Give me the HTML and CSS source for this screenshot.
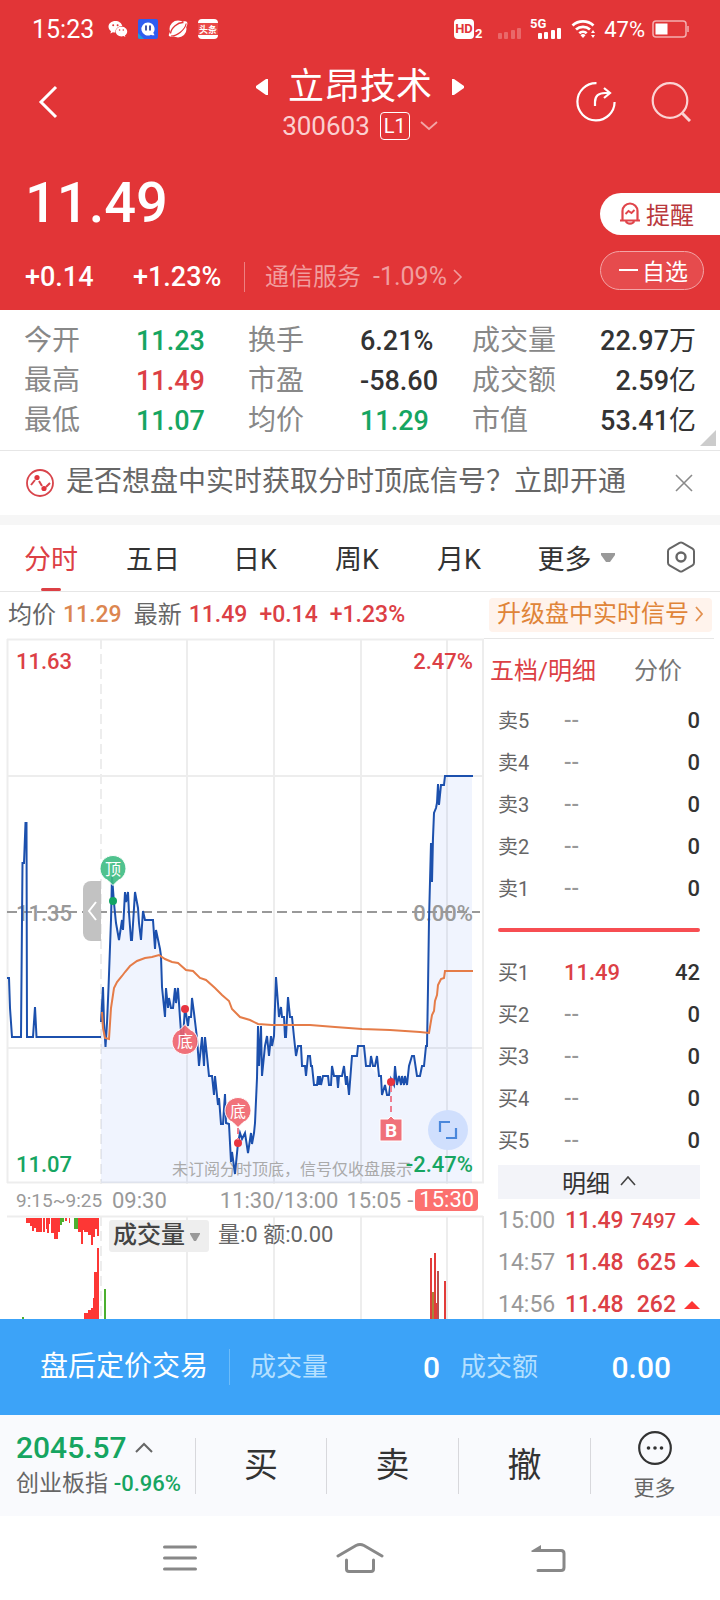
FILE: index.html
```html
<!DOCTYPE html>
<html lang="zh-CN">
<head>
    <meta charset="UTF-8">
    <meta name="viewport" content="width=device-width, initial-scale=1.0">
    <title>立昂技术 300603</title>
    <link rel="stylesheet" href="styles.css">
</head>
<body>
    <header class="top">
        <div class="status-bar">
            <span class="clock">15:23</span>
            <div class="status-apps">
                <svg width="20" height="20" viewBox="0 0 20 20" fill="#fff">
                    <path d="M7.5 2C3.4 2 .5 4.600 .5 7.800c0 1.800 1 3.400 2.500 4.500L2.400 14.500l2.500-1.300c.9.300 1.600.4 2.600.4-.6-3.600 2.600-6.600 6.800-6.600C13.600 4 10.900 2 7.500 2z"/>
                    <path d="M13.500 7.700c-3.300 0-5.700 2.100-5.700 4.800s2.400 4.900 5.700 4.900c.7 0 1.400-.1 2-.3l1.900 1-.5-1.700c1.400-.9 2.300-2.300 2.300-3.900 0-2.700-2.500-4.800-5.700-4.800z"/>
                    <g fill="#e23537"><circle cx="5.200" cy="6.200" r="1"/><circle cx="9.600" cy="6.200" r="1"/><circle cx="11.600" cy="11" r=".8"/><circle cx="15.300" cy="11" r=".8"/></g>
                </svg>
                <svg width="20" height="20" viewBox="0 0 20 20">
                    <rect width="20" height="20" rx="2" fill="#2f5df0"/>
                    <path d="M0 14l6 6H2a2 2 0 0 1-2-2z" fill="#1d9bd8"/>
                    <path d="M10 3.500a6.500 6.500 0 1 0 3 12.200c1 .6 2.200.8 3.500.5l-1.200-2.400A6.500 6.500 0 0 0 10 3.500z" fill="#fff"/>
                    <path d="M8 7v4M12 7v4" stroke="#1b2f8f" stroke-width="1.600" stroke-linecap="round"/>
                </svg>
                <svg width="20" height="20" viewBox="0 0 20 20">
                    <circle cx="10" cy="10" r="8.500" fill="#fff"/>
                    <path d="M1 17C-1 13 15-1 19 3c3 5-13 18-18 14z" fill="#fff"/>
                    <path d="M2.500 14.500C3 9 10 3 15.500 3.500" fill="none" stroke="#e23537" stroke-width="1.400"/>
                    <path d="M3 17C9 17 17 11 18.200 4.500" fill="none" stroke="#e23537" stroke-width="1.200"/>
                </svg>
                <svg width="20" height="20" viewBox="0 0 20 20">
                    <rect width="20" height="20" rx="4" fill="#fff"/>
                    <rect y="4" width="20" height="12" fill="#ea4a48"/>
                    <text x="10" y="13.500" class="app-label">头条</text>
                </svg>
            </div>
            <div class="status-right">
                <svg width="110" height="24" viewBox="0 0 110 24" fill="#fff">
                    <rect x="0" y="2" width="20" height="20" rx="4"/>
                    <text x="10" y="16" class="hd">HD</text>
                    <text x="21" y="21" class="sub">2</text>
                    <g opacity=".25"><rect x="44" y="16" width="4" height="6" rx="1"/><rect x="50" y="15" width="4" height="7" rx="1"/><rect x="57" y="13" width="4" height="9" rx="1"/><rect x="63" y="11" width="4" height="11" rx="1"/></g>
                    <text x="76" y="11" class="net">5G</text>
                    <rect x="84" y="16" width="4" height="6" rx="1"/><rect x="90" y="15" width="4" height="7" rx="1"/><rect x="97" y="13" width="4" height="9" rx="1"/><rect x="103" y="11" width="4" height="11" rx="1"/>
                </svg>
                <svg width="26" height="22" viewBox="0 0 26 22">
                    <g fill="none" stroke="#fff" stroke-width="2.800">
                        <path d="M1.500 7.500a15.500 15.500 0 0 1 21 0"/><path d="M5 11.500a10.500 10.500 0 0 1 14 0"/><path d="M8.300 15.200a5.600 5.600 0 0 1 7.400 0"/>
                    </g>
                    <path d="M12 20l-2.500-2.800a3.600 3.600 0 0 1 5 0zM20 15l2-3 2 3zM20 17l2 3 2-3z" fill="#fff"/>
                </svg>
                <span class="battery-text">47%</span>
                <svg width="37" height="18" viewBox="0 0 37 18">
                    <rect x="1" y="1" width="33" height="16" rx="3" fill="none" stroke="#fff" stroke-opacity=".6" stroke-width="1.500"/>
                    <rect x="3.500" y="3.500" width="12" height="11" fill="#fff"/>
                    <path d="M36 6v6" stroke="#fff" stroke-opacity=".6" stroke-width="1.500"/>
                </svg>
            </div>
        </div>

        <div class="title-bar">
            <button class="icon-btn back" aria-label="返回">
                <svg width="20" height="34" viewBox="0 0 20 34"><path d="M18 2L3 17l15 15" fill="none" stroke="#fff" stroke-width="3"/></svg>
            </button>
            <div class="title">
                <div class="title-name">
                    <button class="icon-btn" aria-label="上一只"><svg width="12" height="18" viewBox="0 0 12 18"><path d="M12 1v16h-2L0 10V8l10-7z" fill="#fff"/></svg></button>
                    <h1>立昂技术</h1>
                    <button class="icon-btn" aria-label="下一只"><svg width="12" height="18" viewBox="0 0 12 18"><path d="M0 1v16h2l10-7V8L2 1z" fill="#fff"/></svg></button>
                </div>
                <div class="title-code">
                    <span>300603</span>
                    <span class="level">L1</span>
                    <svg width="18" height="10" viewBox="0 0 18 10"><path d="M1 1l8 7 8-7" fill="none" stroke="#f3a5a6" stroke-width="1.800"/></svg>
                </div>
            </div>
            <div class="title-tools">
                <button class="icon-btn" aria-label="分享">
                    <svg width="40" height="40" viewBox="0 0 40 40" fill="none" stroke="#fff" stroke-width="2.200"><path d="M20.500 1.200A18.600 18.600 0 1 0 38.600 20"/><path d="M19 24v-4c0-6 4-9 10-9h5M28 6l6 5-6 5"/></svg>
                </button>
                <button class="icon-btn" aria-label="搜索">
                    <svg width="40" height="40" viewBox="0 0 40 40" fill="none" stroke="#fbd3d3" stroke-width="2.200"><circle cx="19" cy="18.500" r="17.300"/><path d="M31.500 31.500l7.500 7.500" stroke-width="3"/></svg>
                </button>
            </div>
        </div>

        <div class="summary">
            <div>
                <div class="price">11.49</div>
                <div class="change">
                    <span class="change-abs">+0.14</span>
                    <span class="change-pct">+1.23%</span>
                    <a class="sector" href="#">
                        <span>通信服务</span>
                        <span class="sector-pct">-1.09%</span>
                        <svg width="10" height="16" viewBox="0 0 10 16"><path d="M1 1l7 7-7 7" fill="none" stroke="#f19d9e" stroke-width="1.600"/></svg>
                    </a>
                </div>
            </div>
            <div class="actions">
                <button class="alert">
                    <svg width="24" height="24" viewBox="0 0 24 24" fill="none" stroke="#e0454b" stroke-width="2.200"><path d="M2 19.500h20M4.500 19.500V10a7.500 7.500 0 0 1 15 0v9.500M8 20.500c1 2.800 7 2.800 8 0"/><path d="M7.500 13l3-3 3 2 3-3" stroke-width="1.800"/></svg>
                    提醒
                </button>
                <button class="favorite"><i></i>自选</button>
            </div>
        </div>
    </header>

    <section class="stats">
        <dl>
            <dt>今开</dt><dd class="green">11.23</dd>
            <dt>换手</dt><dd>6.21%</dd>
            <dt>成交量</dt><dd class="right">22.97<span>万</span></dd>
            <dt>最高</dt><dd class="red">11.49</dd>
            <dt>市盈</dt><dd>-58.60</dd>
            <dt>成交额</dt><dd class="right">2.59<span>亿</span></dd>
            <dt>最低</dt><dd class="green">11.07</dd>
            <dt>均价</dt><dd class="green">11.29</dd>
            <dt>市值</dt><dd class="right">53.41<span>亿</span></dd>
        </dl>
        <span class="corner"></span>
    </section>

    <section class="notice">
        <svg width="28" height="28" viewBox="0 0 28 28" fill="none" stroke="#d8444b" stroke-width="1.800"><circle cx="14" cy="14" r="13"/><path d="M5 16l4-5M13 12l3 5M20 18l4-4" stroke-width="2"/><g fill="#e0343c" stroke="none"><circle cx="11" cy="8.500" r="2.600"/><circle cx="18" cy="19.500" r="2.600"/></g></svg>
        <a href="#">是否想盘中实时获取分时顶底信号？立即开通</a>
        <button class="icon-btn" aria-label="关闭"><svg width="18" height="18" viewBox="0 0 18 18"><path d="M1 1l16 16M17 1L1 17" stroke="#8a8a8a" stroke-width="1.600"/></svg></button>
    </section>

    <nav class="tabs">
        <button class="active">分时</button>
        <button>五日</button>
        <button>日K</button>
        <button>周K</button>
        <button>月K</button>
        <button class="more">更多<svg width="14" height="9" viewBox="0 0 14 9"><path d="M0 0h14v2L9 9H5L0 2z" fill="#999"/></svg></button>
        <button aria-label="设置"><svg width="28" height="32" viewBox="0 0 28 32" fill="none" stroke="#666" stroke-width="2"><path d="M12.500 1.900L2.500 7.700Q1 8.600 1 10.300v11.400q0 1.700 1.500 2.600l10 5.800q1.500.8 3 0l10-5.800q1.500-.9 1.500-2.600V10.300q0-1.700-1.500-2.600l-10-5.800q-1.500-.8-3 0z"/><circle cx="14" cy="16" r="4.500" stroke-width="2.400"/></svg></button>
    </nav>

    <div class="info">
        <span>均价</span><b class="orange">11.29</b>
        <span class="latest">最新</span><b class="red">11.49</b>
        <b class="red wide">+0.14</b><b class="red wide">+1.23%</b>
        <a href="#" class="upgrade">升级盘中实时信号<svg width="9" height="16" viewBox="0 0 9 16"><path d="M1 1l6 7-6 7" fill="none" stroke="#e39150" stroke-width="1.800"/></svg></a>
    </div>

    <main class="quote">
        <div class="charts">
            <div class="price-chart">
                <svg viewBox="0 0 484 546">
                    <g class="grid">
                        <path d="M7 1.500H484M7 138H483M7 410H483M7 544.500H484M7.500 1V545M187 1V546M274 1V546M361 1V546M447 1V546M483 1V545"/>
                        <path d="M101 1V546" stroke-dasharray="10 5"/>
                    </g>
                    <path class="area" d="M101 384L103 349 104 384 105.500 409 107 385 108.500 350 111 282 112 238 114 265 116 285 119 302 122 282 123 292 125 254 126 264 128 254 129 275 131 302 132 302 135 254 138 270 139 285 141 302 143 273 145 282 153 282 155 311 156 292 160 311 161 318 162 349 165 379 166 350 168 370 175 350 178 350 180 380 182 408 185 370 188 388 191 379 192 360 194 375 199 428 202 399 204 428 205 399 209 438 212 438 214 457 215 438 218 467 221 486 225 456 229 486 231 524 235 536 238 505 245 495 248 515 254 495 257 440 258 388 262 438 267 398 274 398 276 339 279 379 284 379 286 399 288 359 292 379 296 418 301 408 305 428 306 438 308 418 314 447 328 438 337 438 349 457 352 418 364 408 370 428 379 438 382 457 389 457 391 441 395 428 397 447 407 447 409 428 414 418 417 438 424 428 427 408 428 350 429 282 431 205 434 175 438 146 441 147 445 138 472 138V545H101z"/>
                    <path class="middle" d="M7 274H480"/>
                    <g class="mark gray"><text x="16" y="283">11.35</text><text x="473" y="283" text-anchor="end">0.00%</text></g>
                    <g class="mark"><text class="up" x="16" y="31">11.63</text><text class="up" x="473" y="31" text-anchor="end">2.47%</text><text class="down" x="16" y="534">11.07</text></g>
                    <text class="tip" x="172" y="537">未订阅分时顶底，信号仅收盘展示</text>
                    <text class="mark down" x="473" y="534" text-anchor="end">-2.47%</text>
                    <polyline class="line" points="7,340 9,340 10,370 12,399 21,399 22.500,225 24,225 25.500,185 26.500,185 27,399 33,399 35,369 36.500,399 101,399"/>
                    <polyline class="line" points="101,384 103,349 104,384 105.500,409 107,385 108.500,350 111,282 112,238 114,265 116,285 119,302 122,282 123,292 125,254 126,264 128,254 129,275 131,302 132,302 135,254 138,270 139,285 141,302 143,273 145,282 153,282 155,311 156,292 160,311 161,318 162,349 165,379 166,350 168,370 169,360 171,370 173,370 175,350 176,365 178,350 180,380 182,408 183,399 185,370 188,388 189,379 191,379 192,360 194,375 197,400 199,428 202,399 204,428 205,399 207,418 209,438 212,438 214,457 215,438 218,467 219,460 221,486 223,486 225,456 226,485 229,486 231,524 232,514 235,536 238,505 240,495 242,501 245,495 248,515 251,495 252,506 254,495 255,485 257,440 258,388 259,428 261,388 262,438 265,408 267,398 269,418 271,398 272,408 274,398 276,339 279,379 281,369 282,379 284,379 285,399 286,399 288,359 290,379 292,379 294,399 296,418 298,408 301,408 302,428 305,428 306,438 308,418 310,418 311,428 312,428 314,447 317,447 318,438 319,447 320,438 321,447 323,438 328,438 329,447 331,447 332,428 334,438 337,438 338,450 339,438 342,438 344,428 346,447 347,438 349,457 352,418 357,418 358,408 364,408 366,428 370,428 371,418 373,428 375,428 377,418 379,438 381,438 382,457 385,447 387,457 389,457 391,441 394,447 395,428 396,438 397,447 399,438 401,447 402,438 404,447 405,438 407,447 409,428 412,418 414,418 417,438 420,438 422,428 424,428 426,408 427,408 428,350 429,282 431,205 432,244 433,200 434,175 436,170 437,165 438,146 439,167 441,147 444,147 445,138 473,138"/>
                    <polyline class="line avg" points="102,374 103,390 105,400 109,401 111,370 114,350 117,344 122,338 125,334 130,328 137,323 145,320 152,319 159,317 165,321 172,324 178,325 186,332 193,333 200,340 206,342 215,350 222,357 229,363 232,371 236,375 240,379 250,382 258,386 272,387 310,387 335,389 362,391 390,392 420,394 429,395 432,377 434,373 435,363 437,357 438,347 441,341 444,340 445,333 473,333"/>
                    <g class="signal top-signal">
                        <path d="M108 242.500l5 5 5-5A13 13 0 1 0 108 242.500z"/>
                        <circle cx="113" cy="263" r="4"/>
                        <text x="113" y="237">顶</text>
                    </g>
                    <g class="signal">
                        <path d="M180 391.500l5-5 5 5A13 13 0 1 1 180 391.500z"/>
                        <circle cx="185" cy="371" r="4"/>
                        <text x="185" y="409">底</text>
                        <path d="M233 484.500l5 5 5-5A13 13 0 1 0 233 484.500z"/>
                        <circle cx="238" cy="505" r="4"/>
                        <text x="238" y="479">底</text>
                        <path class="stem" d="M238 490v12M391 448v30"/>
                        <path d="M380 481h8l3-3 3 3h8v22h-22z"/>
                        <circle cx="391" cy="444" r="4"/>
                        <text class="letter" x="391" y="499">B</text>
                    </g>
                </svg>
                <button class="handle" aria-label="收起"><svg width="10" height="20" viewBox="0 0 10 20"><path d="M9 1L2 10l7 9" fill="none" stroke="#fff" stroke-width="2"/></svg></button>
                <button class="expand" aria-label="全屏"><svg width="20" height="20" viewBox="0 0 20 20"><path d="M2 12V2h10M18 8v10H8" fill="none" stroke="#4a87db" stroke-width="2.200"/></svg></button>
            </div>
            <div class="axis">
                <span class="pre">9:15~9:25</span>
                <span>09:30</span>
                <span class="noon">11:30/13:00</span>
                <span class="close">15:05</span>
                <span>-</span>
                <span class="after">15:30</span>
            </div>
            <div class="volume">
                <svg viewBox="0 0 484 103">
                    <g class="grid">
                        <path d="M7 .5H483M187 0V103M274 0V103M361 0V103M447 0V103M483 0V103"/>
                        <path d="M101 0V103" stroke-dasharray="10 5"/>
                    </g>
                    <path fill="#fd3735" d="M26 2h16v14h-6v-4h-2v3h-2v-5h-2V7h-4zM43 2h2v14h-2zM46 2h4v6h-1v9h-2v-4h-1zM51 2h9v14h-2v7h-4v-6h-3zM65 2h2v3h-2zM69 2h1v5h-1zM78 2h21v18h-2v-7h-2v8h-2v8h-2v-10h-3v-3h-4v-2h-1v14h-2V16h-3zM84 103v-6h4v-3h3v-2h2V82h1V56h3V32h2v71z"/>
                    <path fill="#4caf2f" d="M60 2h4v4h-2v3h-2zM74 2h4v11h-4zM104 73h2v30h-2zM22 101h2v2h-2z"/>
                    <path fill="#e23c3a" d="M430 42h2v61h-2zM434 37h2v66h-2zM436 87h2v16h-2zM444 65h2v38h-2z"/>
                    <path fill="#a8843a" d="M432 76h2v27h-2z"/>
                    <path fill="#b8504e" d="M437 55h2v48h-2z"/>
                </svg>
                <div class="volume-head">
                    <div class="picker">
                        <select aria-label="指标"><option>成交量</option><option>MACD</option></select>
                        <svg width="10" height="8" viewBox="0 0 10 8"><path d="M0 0h10v1L6 8H4L0 1z" fill="#999"/></svg>
                    </div>
                    <span>量:0 额:0.00</span>
                </div>
            </div>
        </div>

        <aside class="book">
            <div class="book-tabs">
                <button class="active">五档/明细</button>
                <button>分价</button>
            </div>
            <table>
                <tr><th>卖5</th><td>--</td><td>0</td></tr>
                <tr><th>卖4</th><td>--</td><td>0</td></tr>
                <tr><th>卖3</th><td>--</td><td>0</td></tr>
                <tr><th>卖2</th><td>--</td><td>0</td></tr>
                <tr><th>卖1</th><td>--</td><td>0</td></tr>
            </table>
            <div class="ratio"></div>
            <table>
                <tr><th>买1</th><td class="red">11.49</td><td>42</td></tr>
                <tr><th>买2</th><td>--</td><td>0</td></tr>
                <tr><th>买3</th><td>--</td><td>0</td></tr>
                <tr><th>买4</th><td>--</td><td>0</td></tr>
                <tr><th>买5</th><td>--</td><td>0</td></tr>
            </table>
            <button class="detail">明细<svg width="16" height="10" viewBox="0 0 16 10"><path d="M1 9l7-8 7 8" fill="none" stroke="#444" stroke-width="1.600"/></svg></button>
            <table class="trades">
                <tr><td>15:00</td><td>11.49</td><td class="long">7497</td><td><i></i></td></tr>
                <tr><td>14:57</td><td>11.48</td><td>625</td><td><i></i></td></tr>
                <tr><td>14:56</td><td>11.48</td><td>262</td><td><i></i></td></tr>
            </table>
        </aside>
    </main>

    <div class="after-hours">
        <a href="#">盘后定价交易</a>
        <span class="label">成交量</span><span class="num">0</span>
        <span class="label">成交额</span><span class="num">0.00</span>
    </div>

    <footer class="trade-bar">
        <div class="index">
            <div class="index-value">2045.57<svg width="18" height="11" viewBox="0 0 18 11"><path d="M1 10l8-8 8 8" fill="none" stroke="#666" stroke-width="2"/></svg></div>
            <div class="index-name">创业板指 <span>-0.96%</span></div>
        </div>
        <button>买</button>
        <button>卖</button>
        <button>撤</button>
        <button class="more">
            <svg width="34" height="34" viewBox="0 0 34 34"><circle cx="17" cy="17" r="15.800" fill="none" stroke="#333" stroke-width="2.200"/><g fill="#333"><circle cx="10.500" cy="17" r="1.800"/><circle cx="17" cy="17" r="1.800"/><circle cx="23.500" cy="17" r="1.800"/></g></svg>
            更多
        </button>
    </footer>

    <nav class="system-nav">
        <button class="icon-btn" aria-label="菜单"><svg width="34" height="28" viewBox="0 0 34 28"><path d="M1.500 3h31M1.500 14h31M1.500 25h31" stroke="#888" stroke-width="3" stroke-linecap="round"/></svg></button>
        <button class="icon-btn" aria-label="主页"><svg width="48" height="32" viewBox="0 0 48 32" fill="none" stroke="#888" stroke-width="3" stroke-linecap="round"><path d="M2 14L20 3.500q4-2 8 0L46 14"/><path d="M10.500 18v9q0 2.500 2.500 2.500h22q2.500 0 2.500-2.500v-9"/></svg></button>
        <button class="icon-btn" aria-label="后退"><svg width="36" height="28" viewBox="0 0 36 28"><path d="M6 6.500h24q3 0 3 3v14q0 3-3 3H7" fill="none" stroke="#888" stroke-width="3" stroke-linecap="round"/><path d="M0 7l10-6v7H1z" fill="#888"/></svg></button>
    </nav>
</body>
</html>
```

FILE: styles.css
```css
* {
    box-sizing: border-box;
}
body {
    display: flex;
    flex-direction: column;
    height: 100vh;
    margin: 0;
    overflow: hidden;
    font-family: Roboto, "Noto Sans CJK SC", sans-serif;
    font-size: 24px;
    color: #333;
    background: #fff;
}
button {
    padding: 0;
    border: none;
    background: none;
    font: inherit;
    color: inherit;
    cursor: pointer;
}
a {
    color: inherit;
    text-decoration: none;
}
svg {
    display: block;
    flex: none;
}
h1, dl, dd {
    margin: 0;
}
.icon-btn {
    display: flex;
}
.red {
    color: #dc4045;
}
.green {
    color: #16a561;
}
.orange {
    color: #dc8650;
}

/* header */
.top {
    flex: none;
    background: #e23537;
    color: #fff;
}
.status-bar {
    display: flex;
    align-items: center;
    height: 58px;
    padding: 0 31px 0 32px;
}
.clock {
    font-size: 25px;
}
.status-apps {
    display: flex;
    gap: 10px;
    margin-left: 14px;
}
.status-right {
    display: flex;
    align-items: center;
    gap: 7px;
    margin-left: auto;
}
.app-label {
    font-size: 9px;
    font-weight: 700;
    text-anchor: middle;
    fill: #fff;
}
.hd {
    font-size: 13px;
    font-weight: 700;
    text-anchor: middle;
    fill: #e23537;
}
.sub, .net {
    font-size: 13px;
    font-weight: 700;
}
.battery-text {
    font-size: 22px;
}
.title-bar {
    display: grid;
    grid-template-columns: 1fr auto 1fr;
    align-items: center;
    height: 88px;
    padding: 0 29px;
}
.back {
    padding-left: 9px;
}
.title-name {
    display: flex;
    align-items: center;
    justify-content: center;
    gap: 20px;
}
.title h1 {
    font-size: 36px;
    font-weight: 400;
    line-height: 48px;
}
.title-code {
    display: flex;
    align-items: center;
    justify-content: center;
    gap: 10px;
    font-size: 26px;
    line-height: 30px;
    color: #fbcfcf;
}
.level {
    padding: 0 3px;
    border: 1px solid #fff;
    border-radius: 4px;
    font-size: 20px;
    line-height: 26px;
    color: #fff;
}
.title-tools {
    display: flex;
    justify-content: flex-end;
    gap: 35px;
}
.summary {
    display: flex;
    justify-content: space-between;
    padding: 27px 0 18px 25px;
}
.price {
    font-size: 56px;
    font-weight: 500;
    line-height: 60px;
}
.change {
    display: flex;
    align-items: center;
    margin-top: 29px;
    font-size: 27px;
    font-weight: 500;
    line-height: 30px;
}
.change-abs {
    width: 108px;
}
.change-pct {
    width: 111px;
}
.sector {
    display: flex;
    align-items: center;
    gap: 12px;
    padding-left: 20px;
    border-left: 1px solid #ee8081;
    font-size: 24px;
    font-weight: 400;
    color: #f19d9e;
}
.sector-pct {
    font-size: 25px;
}
.sector svg {
    margin-left: -6px;
}
.actions {
    display: flex;
    flex-direction: column;
    align-items: flex-end;
    gap: 16px;
    padding-top: 20px;
}
.alert {
    display: flex;
    align-items: center;
    gap: 4px;
    height: 42px;
    padding: 0 26px 2px 18px;
    border-radius: 21px 0 0 21px;
    background: #fff;
    color: #b9383d;
}
.favorite {
    display: flex;
    align-items: center;
    gap: 4px;
    height: 39px;
    margin-right: 16px;
    padding: 0 15px 2px 18px;
    border: 1px solid #f3a5a6;
    border-radius: 20px;
    background: #e64b4d;
    font-size: 23px;
}
.favorite i {
    width: 19px;
    height: 2px;
    background: #fff;
}

/* figures */
.stats {
    position: relative;
    flex: none;
    border-bottom: 1px solid #e6e6e6;
    padding: 11px 24px 9px;
}
.stats dl {
    display: grid;
    grid-template-columns: repeat(6, 1fr);
    font-size: 27px;
    line-height: 40px;
}
.stats dt {
    font-size: 28px;
    color: #888;
}
.stats dd {
    font-weight: 500;
    white-space: nowrap;
}
.stats dd span {
    font-weight: 400;
}
.stats .right {
    text-align: right;
}
.corner {
    position: absolute;
    right: 4px;
    bottom: 4px;
    border-left: 16px solid transparent;
    border-bottom: 16px solid #ccc;
}
.notice {
    display: flex;
    flex: none;
    align-items: center;
    gap: 12px;
    height: 74px;
    padding: 0 27px 0 26px;
    border-bottom: 10px solid #f6f6f6;
    font-size: 28px;
    line-height: 40px;
    color: #666;
}
.notice a {
    padding-bottom: 2px;
}
.notice .icon-btn {
    margin-left: auto;
}
.tabs {
    display: grid;
    flex: none;
    grid-template-columns: repeat(5, 102fr) 132fr 78fr;
    height: 67px;
    border-bottom: 1px solid #e6e6e6;
    font-size: 27px;
}
.tabs button {
    position: relative;
    display: flex;
    align-items: center;
    justify-content: center;
    padding-bottom: 2px;
}
.tabs .active {
    color: #dc4045;
}
.tabs .active::after {
    content: "";
    position: absolute;
    left: 50%;
    bottom: 0;
    width: 20px;
    height: 3px;
    margin-left: -10px;
    border-radius: 2px;
    background: #dc4045;
}
.tabs .more {
    gap: 9px;
}
.info {
    display: flex;
    flex: none;
    align-items: center;
    height: 46px;
    padding: 0 8px 1px;
    line-height: 32px;
    color: #666;
}
.info b {
    margin-left: 7px;
    font-size: 23px;
    font-weight: 500;
}
.info .latest, .info .wide {
    margin-left: 12px;
}
.upgrade {
    display: flex;
    align-items: center;
    gap: 6px;
    height: 34px;
    margin-left: auto;
    padding: 0 8px 1px;
    border-radius: 4px;
    background: #fff3ec;
    color: #e08438;
}

/* charts */
.quote {
    display: grid;
    flex: 1;
    grid-template-columns: 484fr 236fr;
    align-items: start;
    min-height: 0;
    overflow: hidden;
}
.charts svg {
    overflow: visible;
}
.price-chart, .volume {
    position: relative;
}
.price-chart > svg, .volume > svg {
    width: 100%;
}
.grid path {
    fill: none;
    stroke: #ededed;
    stroke-width: 2;
}
.area {
    fill: #3c78f0;
    fill-opacity: .08;
}
.middle {
    stroke: #999;
    stroke-width: 2;
    stroke-dasharray: 10 5;
}
.line {
    fill: none;
    stroke: #1c50ad;
    stroke-width: 2;
}
.avg {
    stroke: #e57c48;
}
.mark {
    font-size: 22px;
    font-weight: 500;
}
.gray {
    fill: #999;
}
.up {
    fill: #dc4045;
}
.down {
    fill: #16a561;
}
.tip {
    font-size: 16px;
    fill: #aaa;
}
.signal path {
    fill: #f0636b;
    fill-opacity: .9;
    stroke: #fff;
}
.signal circle {
    fill: #e7343f;
}
.signal text {
    font-size: 16px;
    text-anchor: middle;
    fill: #fff;
}
.signal .letter {
    font-size: 19px;
    font-weight: 700;
}
.signal .stem {
    fill: none;
    stroke: #ee7d90;
    stroke-width: 2;
    stroke-dasharray: 6 4;
}
.top-signal path {
    fill: #3dbb82;
}
.top-signal circle {
    fill: #12a564;
}
.handle {
    position: absolute;
    top: 243px;
    left: 83px;
    display: flex;
    align-items: center;
    justify-content: center;
    width: 18px;
    height: 60px;
    border-radius: 8px 0 0 8px;
    background: #c2c2c2;
}
.expand {
    position: absolute;
    right: 16px;
    bottom: 34px;
    display: flex;
    align-items: center;
    justify-content: center;
    width: 40px;
    height: 40px;
    border-radius: 50%;
    background: #d0dffd;
}
.axis {
    display: flex;
    align-items: center;
    height: 32px;
    padding-left: 16px;
    font-size: 22px;
    color: #999;
}
.axis .pre {
    width: 96px;
    font-size: 19px;
}
.axis .noon {
    margin-left: 53px;
}
.axis .close {
    margin: 0 6px 0 8px;
}
.axis .after {
    margin-left: 2px;
    padding: 0 4px;
    border-radius: 4px;
    background: #fc706e;
    line-height: 22px;
    color: #fff;
}
.volume-head {
    position: absolute;
    top: 4px;
    left: 109px;
    display: flex;
    align-items: center;
    gap: 9px;
    font-size: 22px;
    line-height: 28px;
    color: #666;
}
.volume-head span {
    padding-bottom: 3px;
}
.picker {
    position: relative;
    width: 100px;
    border-radius: 3px;
    background: #eee;
}
.picker select {
    display: block;
    width: 100%;
    height: 32px;
    padding: 0 4px 3px;
    border: none;
    background: none;
    appearance: none;
    font: inherit;
    font-size: 24px;
    font-weight: 500;
    color: #444;
}
.picker svg {
    position: absolute;
    top: 13px;
    right: 9px;
    pointer-events: none;
}

/* order book */
.book {
    margin-right: 6px;
    padding: 0 14px;
    border-top: 1px solid #e6e6e6;
}
.book-tabs {
    display: flex;
    gap: 38px;
    height: 61px;
    margin-left: -8px;
    padding-bottom: 3px;
    white-space: nowrap;
    color: #777;
}
.book-tabs .active {
    color: #dc4045;
}
.book table {
    width: 100%;
    border-collapse: collapse;
    table-layout: fixed;
}
.book th, .book td {
    height: 42px;
    padding: 0;
    font-size: 22px;
    font-weight: 500;
    line-height: 30px;
    text-align: left;
}
.book th {
    width: 66px;
    font-size: 20px;
    font-weight: 400;
    color: #666;
}
.book td:nth-child(2):not(.red) {
    color: #999;
}
.book td:last-child {
    text-align: right;
}
.ratio {
    height: 4px;
    margin: 18px 0 20px;
    border-radius: 2px;
    background: #f74e52;
}
.detail {
    display: flex;
    align-items: center;
    justify-content: center;
    gap: 10px;
    width: 100%;
    height: 34px;
    margin: 3px 0 1px;
    padding-bottom: 2px;
    background: #f3f4f9;
}
.book .trades td {
    width: 67px;
    font-size: 23px;
    color: #dc4045;
}
.book .trades td:first-child {
    font-weight: 400;
    color: #999;
}
.book .trades td:nth-child(2) {
    width: 57px;
    color: #dc4045;
}
.book .trades td:nth-child(3) {
    width: 54px;
    text-align: right;
}
.book .trades td:last-child {
    width: auto;
}
.book .trades .long {
    font-size: 20px;
}
.trades i {
    display: block;
    width: 16px;
    margin-left: auto;
    border: 8px solid transparent;
    border-top: none;
    border-bottom-color: #fd3735;
}

/* bottom bars */
.after-hours {
    display: grid;
    flex: none;
    grid-template-columns: 190px 100px 110fr 100px 131fr;
    align-items: center;
    height: 96px;
    padding: 0 49px 0 40px;
    background: #3ca3f8;
    color: #fff;
}
.after-hours a {
    border-right: 1px solid #6cbcfa;
    font-size: 28px;
    line-height: 36px;
}
.after-hours .label {
    padding-left: 20px;
    font-size: 26px;
    line-height: 36px;
    color: #b5e0ff;
}
.after-hours .num {
    font-size: 30px;
    font-weight: 500;
    text-align: right;
}
.trade-bar {
    display: grid;
    flex: none;
    grid-template-columns: 195fr 131fr 132fr 132fr 130fr;
    align-items: center;
    height: 101px;
    background: #f9fafd;
}
.trade-bar button {
    height: 56px;
    padding-bottom: 2px;
    border-left: 1px solid #d8d8dc;
    font-size: 34px;
    line-height: 48px;
}
.index {
    padding-left: 16px;
    white-space: nowrap;
}
.index-value {
    display: flex;
    align-items: center;
    gap: 8px;
    font-size: 30px;
    font-weight: 500;
    line-height: 36px;
    color: #16a561;
}
.index-name {
    font-size: 23px;
    line-height: 36px;
    color: #666;
}
.index-name span {
    font-size: 22px;
    font-weight: 500;
    color: #16a561;
}
.trade-bar .more {
    display: flex;
    flex-direction: column;
    align-items: center;
    justify-content: center;
    gap: 8px;
    padding: 2px 2px 0 0;
    font-size: 21px;
    line-height: 30px;
    color: #666;
}
.system-nav {
    display: grid;
    flex: none;
    grid-template-columns: 180fr 180fr 198fr;
    align-items: center;
    justify-items: center;
    height: 84px;
    padding: 0 72px 0 90px;
}
```
